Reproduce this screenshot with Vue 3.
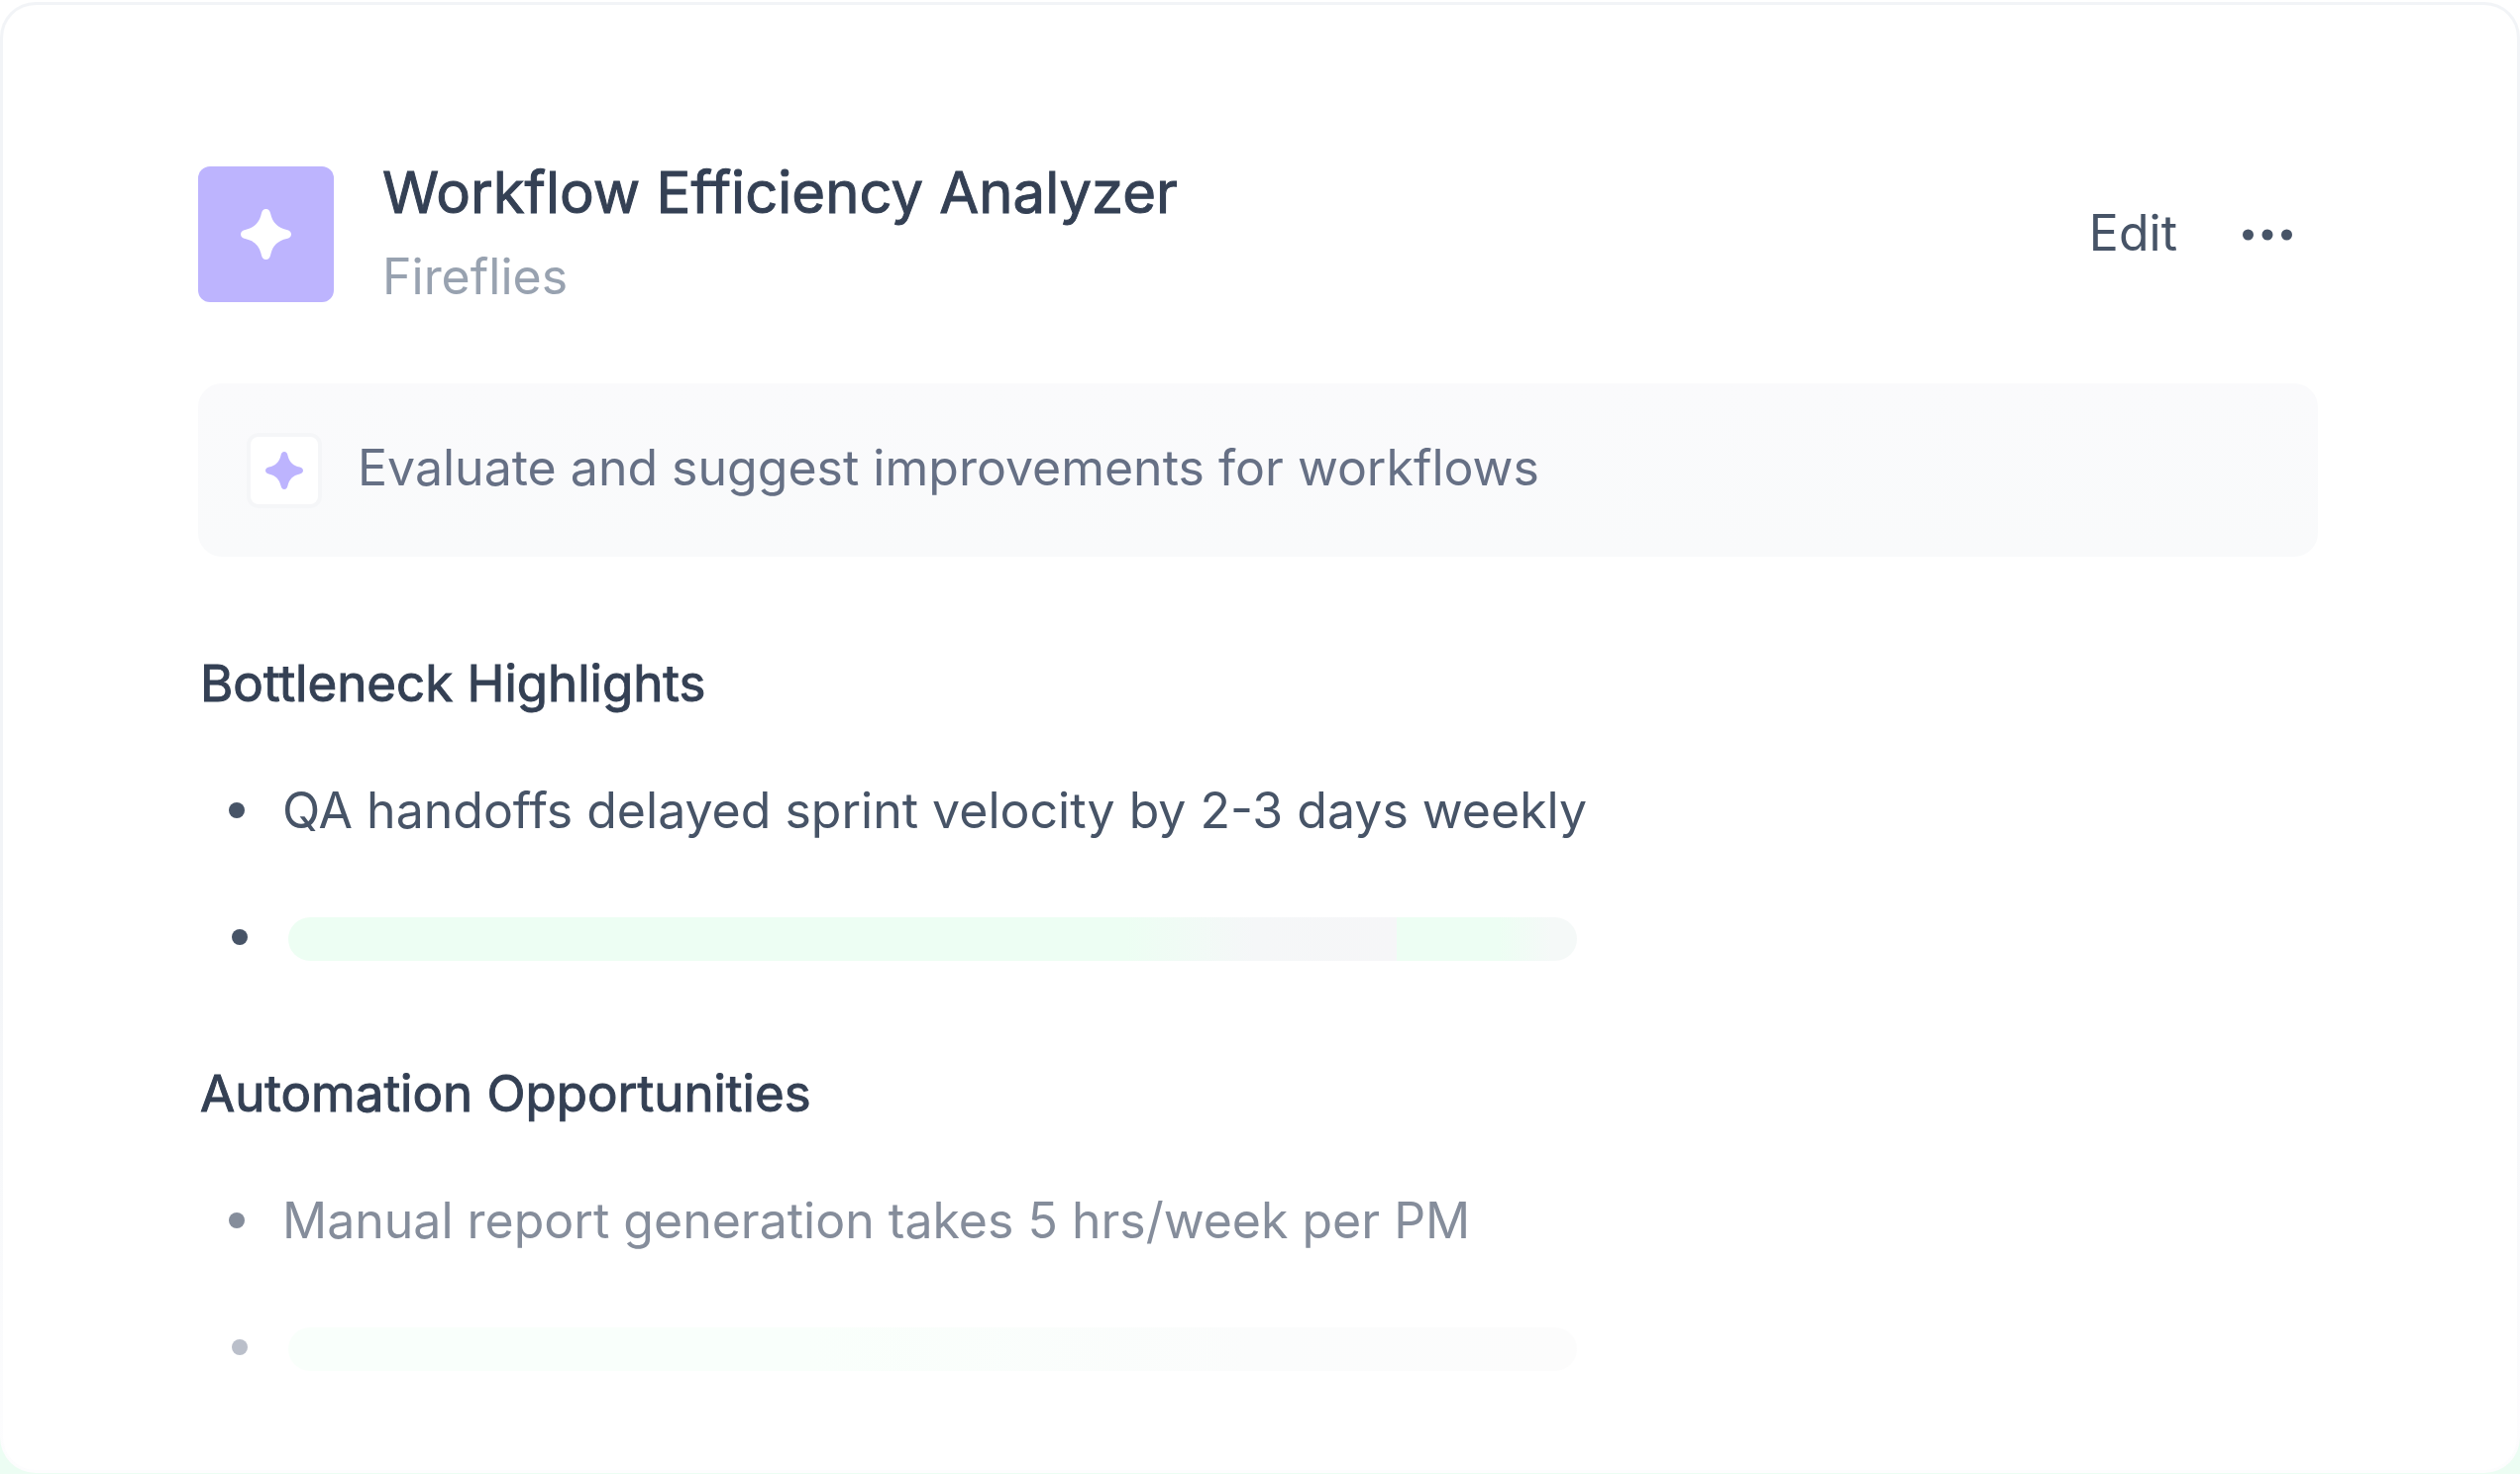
<script setup>
const sections = [
  { title: 'Bottleneck Highlights', text: 'QA handoffs delayed sprint velocity by 2-3 days weekly', tone: 'strong' },
  { title: 'Automation Opportunities', text: 'Manual report generation takes 5 hrs/week per PM', tone: 'faded' },
]
const star = 'M50 0C55 0 58 4 59 9C63 27 73 37 91 41C96 42 100 45 100 50C100 55 96 58 91 59C73 63 63 73 59 91C58 96 55 100 50 100C45 100 42 96 41 91C37 73 27 63 9 59C4 58 0 55 0 50C0 45 4 42 9 41C27 37 37 27 41 9C42 4 45 0 50 0Z'
</script>

<template>
  <div class="page">
    <main class="card">
      <header class="header">
        <div class="logo">
          <svg viewBox="0 0 100 100" width="51" height="51" aria-hidden="true"><path :d="star" fill="#fff" /></svg>
        </div>
        <div class="titles">
          <h1>Workflow Efficiency Analyzer</h1>
          <p>Fireflies</p>
        </div>
        <div class="actions">
          <button type="button" class="edit">Edit</button>
          <button type="button" class="more" aria-label="More options">
            <svg viewBox="0 0 50 12" width="50" height="12" aria-hidden="true">
              <circle cx="5.5" cy="6" r="5.5" /><circle cx="25" cy="6" r="5.5" /><circle cx="44.5" cy="6" r="5.5" />
            </svg>
          </button>
        </div>
      </header>

      <div class="prompt">
        <span class="tile">
          <svg viewBox="0 0 100 100" width="38" height="38" aria-hidden="true"><path :d="star" fill="#bdb4fe" /></svg>
        </span>
        <p>Evaluate and suggest improvements for workflows</p>
      </div>

      <section v-for="s in sections" :key="s.title" :class="s.tone">
        <h2>{{ s.title }}</h2>
        <ul>
          <li><span class="dot"></span><span>{{ s.text }}</span></li>
          <li class="pending"><span class="dot"></span><span class="bar"></span></li>
        </ul>
      </section>
    </main>
  </div>
</template>

<style>
body {
  margin: 0;
  background: #fff;
}
</style>

<style scoped>
.page {
  box-sizing: border-box;
  min-height: 100vh;
  padding: 2px 0 1px;
  background: linear-gradient(#fff 80%, #ecfdf3 90%);
  font-family: Inter, "Liberation Sans", sans-serif;
}
.card {
  box-sizing: border-box;
  min-height: calc(100vh - 3px);
  padding: 153px 201px 90px 197px;
  border: 3px solid transparent;
  border-radius: 36px;
  background:
    linear-gradient(#fff, #fff) padding-box,
    linear-gradient(#f2f4f7 60%, #fdfdfe 100%) border-box;
}
h1, h2, p, ul {
  margin: 0;
  padding: 0;
  font-weight: 400;
}
h1, h2 {
  color: #344054;
  -webkit-text-stroke: 1px currentColor;
}
.header {
  display: flex;
  align-items: center;
}
.logo {
  display: flex;
  align-items: center;
  justify-content: center;
  width: 137px;
  height: 137px;
  border-radius: 12px;
  background: #bdb4fe;
}
.titles {
  display: flex;
  flex-direction: column;
  gap: 13px;
  margin-left: 49px;
}
h1 {
  font-size: 58px;
  line-height: 72px;
}
.titles p {
  font-size: 50px;
  line-height: 72px;
  color: #98a2b0;
}
.actions {
  display: flex;
  align-items: center;
  gap: 66px;
  margin-left: auto;
  margin-right: 26px;
}
button {
  padding: 0;
  border: 0;
  background: none;
  font: inherit;
  color: #475467;
  cursor: pointer;
}
.edit {
  padding-bottom: 4px;
  font-size: 50px;
  line-height: 60px;
}
.more {
  display: flex;
  fill: currentColor;
}
.prompt {
  display: flex;
  align-items: center;
  gap: 36px;
  box-sizing: border-box;
  min-height: 175px;
  margin-top: 72px;
  padding: 0 49px;
  border-radius: 24px;
  background: linear-gradient(#fafafc, #f9fafb);
  color: #667085;
}
.tile {
  display: flex;
  align-items: center;
  justify-content: center;
  width: 68px;
  height: 68px;
  border: 4px solid #f5f6f8;
  border-radius: 12px;
  background: #fff;
}
.prompt p {
  padding-bottom: 6px;
  font-size: 50px;
  line-height: 60px;
}
section {
  margin-top: 98px;
  padding-left: 2px;
}
h2 {
  font-size: 51px;
  line-height: 60px;
}
ul {
  list-style: none;
}
li {
  display: flex;
  align-items: center;
  height: 60px;
  margin-top: 68px;
  padding-left: 29px;
  gap: 38px;
  font-size: 50px;
  line-height: 60px;
  color: #475467;
}
.dot {
  width: 16px;
  height: 16px;
  border-radius: 50%;
  background: currentColor;
}
.pending {
  padding-left: 32px;
  gap: 41px;
}
.bar {
  width: 1301px;
  height: 44px;
  margin-top: 4px;
  border-radius: 22px;
  background: linear-gradient(90deg, #edfef3 65%, #f5f7f8 75%, #f6f6f8 86%, #edfef3 86%, #edfef3 94%, #f5f9f8 98%);
}
.faded li {
  color: #858d9b;
}
.faded .pending {
  color: #babfca;
}
.faded .bar {
  background: linear-gradient(90deg, #f9fffb 40%, #fbfcfc 75%, #fcfcfc);
}
</style>
